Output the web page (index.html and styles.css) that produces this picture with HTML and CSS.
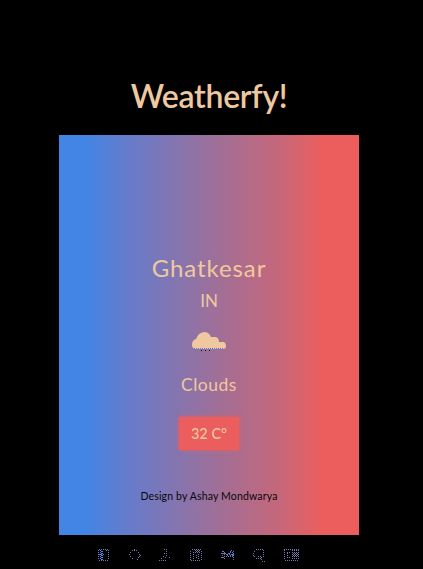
FILE: index.html
```html
<!DOCTYPE html>
<html lang="en">
<head>
<meta charset="utf-8">
<title>Weatherfy!</title>
<link rel="stylesheet" href="styles.css">
</head>
<body>
<h1 class="title">Weatherfy!</h1>
<main class="card">
  <h2 class="city">Ghatkesar</h2>
  <p class="country">IN</p>
  <svg class="cloud" viewBox="0 0 34 20">
    <path class="puff" d="M3 17Q0 16 0 13Q0 8 4 7Q6 1 12 0Q17 0 19 5L24 5Q27 6 27 10L32 10Q34 11 34 14Q34 17 31 17Z"/>
    <path class="base" d="M2 16.5H32"/>
    <path class="rain" d="M9 18.5h1M13 18.5h1M17 18.5h1"/>
  </svg>
  <p class="sky">Clouds</p>
  <div class="temp">32 C°</div>
  <p class="credit">Design by Ashay Mondwarya</p>
</main>
<footer class="links">
  <svg width="12" height="12" viewBox="0 0 12 12"><path d="M1 .5H11M.5 1V11M1 11.5H11M10.5 1V11M7.5 1.5H10"/><path class="blue" d="M2.5 1V11M4.5 2V12M1 5.5H6M3.5 2V11"/></svg>
  <svg width="12" height="12" viewBox="0 0 12 12"><path d="M5 .5H6M3 1.5H8M1 3.5H2M9 3.5H10M0 5.5H1M10 5.5H11M11 6.5H12M1 7.5H2M10 7.5H11M9 8.5H10M3 9.5H4M8 10.5H9"/></svg>
  <svg width="12" height="12" viewBox="0 0 12 12"><path d="M5 .5H8M7.5 2V8M5 4.5H6M4 7.5H5M6 8.5H7M2 9.5H3M10 8.5H11M0 11.5H8"/></svg>
  <svg width="12" height="12" viewBox="0 0 12 12"><path d="M2 .5H11M.5 2V11M1 11.5H11M11.5 2V11M3.5 5V10M6.5 6V10M8.5 5V10M3 3.5H10M5 1.5H11M6 2.5H10"/></svg>
  <svg width="14" height="12" viewBox="0 0 14 12"><path d="M1.5 2V10M2 2.5L6 6.5L11 1.5M3.5 3V11M5 7.5H10M12.5 2V11M0 4.5H5M0 8.5H4"/><path class="blue" d="M8 5.5H13M9 6.5H12M11.5 3V9"/></svg>
  <svg width="12" height="13" viewBox="0 0 12 13"><path d="M3 .5H10M1.5 2V4M.5 4V7M1.5 7V9M3 9.5H8M10.5 1V8M5 7.5H9M8.5 8V11M9 12.5H12"/></svg>
  <svg width="15" height="12" viewBox="0 0 15 12"><path d="M0 .5H15M.5 1V11M1 11.5H15M14.5 1V11M3 3.5H7M3.5 4V8M3 8.5H7M8.5 1V11M10.5 1V11M12.5 1V11M9 4.5H14M9 6.5H14"/></svg>
</footer>
</body>
</html>
```
FILE: styles.css
```css
* { box-sizing: border-box; }
body {
  margin: 0;
  height: 569px;
  overflow: hidden;
  background: #000;
  color: #efc8a0;
  font-family: Lato, sans-serif;
  display: flex;
  flex-direction: column;
  align-items: center;
  padding: 76px 5px 0 0;
}
h1, h2, p { margin: 0; white-space: nowrap; }
.title {
  height: 59px;
  font-size: 32px;
  line-height: 40px;
  font-weight: 600;
  letter-spacing: -.3px;
}
.card {
  width: 300px;
  height: 400px;
  flex: none;
  padding-top: 117px;
  display: flex;
  flex-direction: column;
  align-items: center;
  background: linear-gradient(90deg, #4285e5 9%, #637ccd 22%, #a46e94 55%, #c7677a 74%, #eb5e5d 88%);
}
.city { font-size: 24px; line-height: 32px; font-weight: 400; letter-spacing: .9px; }
.country { font-size: 17px; line-height: 34px; }
.cloud { width: 34px; height: 20px; margin-top: 14px; }
.puff { fill: #efc8a0; }
.base { stroke: #4285e5; stroke-dasharray: 1 1; }
.rain { stroke: #000; }
.sky { margin-top: 21px; font-size: 17.5px; line-height: 24px; letter-spacing: .5px; }
.temp {
  width: 60px;
  height: 33px;
  margin-top: 20px;
  background: #eb5e5d;
  box-shadow: 0 0 4px #eb5e5d;
  font-size: 14.5px;
  font-weight: 500;
  line-height: 33px;
  text-align: center;
}
.credit { margin-top: 39px; color: #080808; font-size: 10.5px; line-height: 14px; letter-spacing: .15px; }
.links {
  display: flex;
  width: 201px;
  margin: 14px 0 0 -21px;
  justify-content: space-between;
}
.links svg {
  fill: none;
  stroke: #7774b2;
  stroke-dasharray: 1 1;
  shape-rendering: crispEdges;
}
.links .blue { stroke: #4285e5; }
```
